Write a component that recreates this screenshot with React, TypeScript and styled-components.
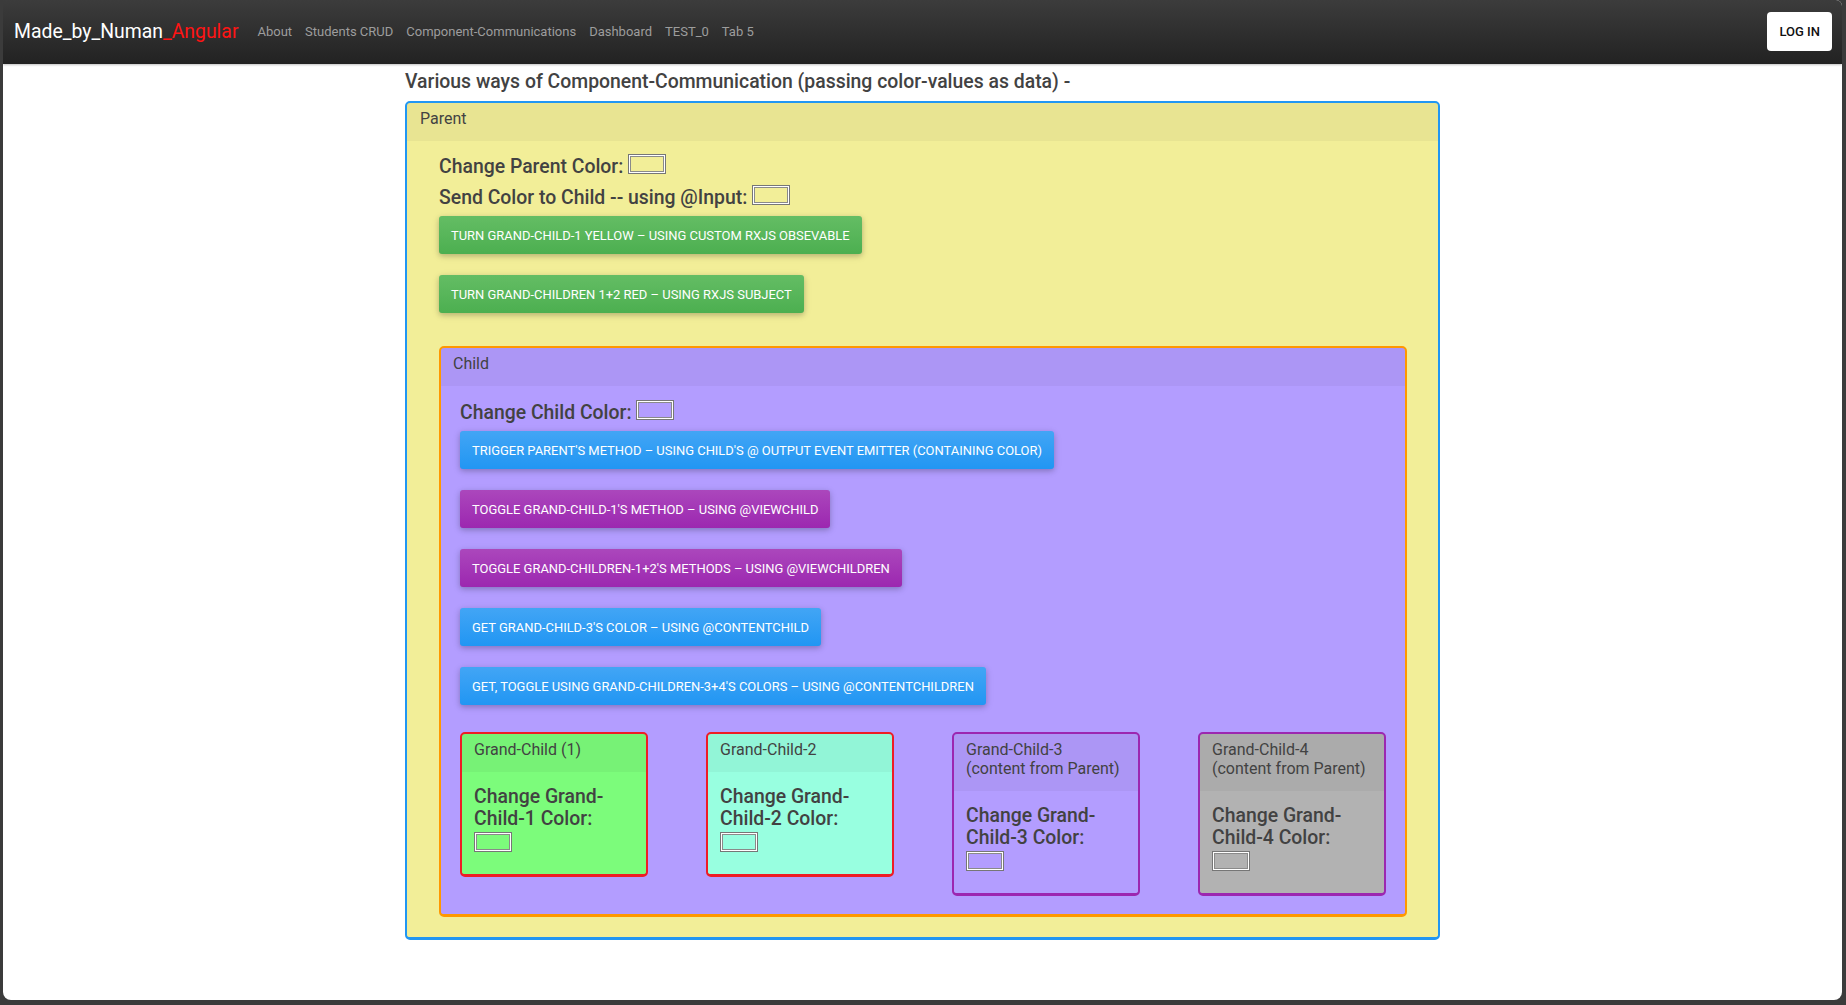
import React from "react";
import styled, { createGlobalStyle } from "styled-components";

const GlobalStyle = createGlobalStyle`
  * {
    box-sizing: border-box;
  }

  body {
    margin: 0;
    background-color: #3b3b3b;
    font-family: Roboto, "Liberation Sans", sans-serif;
  }
`;

const Frame = styled.div`
  margin: 0 4px 0 3px;
  height: 1000px;
  background-color: #ffffff;
  border-radius: 0 6px 8px 8px;
  overflow: hidden;
`;

const NavBar = styled.nav`
  height: 64px;
  padding: 0 10px 2px 11px;

  display: flex;
  align-items: center;

  background-image: linear-gradient(to bottom, #3c3c3c 0%, #222222 100%);
  box-shadow: 0 1px 2px rgba(0, 0, 0, 0.25);
`;

const Brand = styled.a`
  margin-right: 19px;

  font-size: 19.4px;
  color: #ffffff;
  text-decoration: none;
`;

const BrandAccent = styled.span`
  color: #ff1414;
`;

const NavLinks = styled.div`
  display: flex;
  gap: 13px;
`;

const NavLink = styled.a`
  font-size: 13px;
  color: #9d9d9d;
  text-decoration: none;
`;

const LoginButton = styled.button`
  margin-left: auto;
  height: 39px;
  padding: 0 12px;

  border: none;
  border-radius: 4px;
  background-color: #ffffff;

  font-family: Roboto, "Liberation Sans", sans-serif;
  font-size: 13px;
  font-weight: 500;
  color: #111111;
`;

const Main = styled.main`
  width: 1035px;
  margin: 0 auto;
  padding-top: 6px;
`;

const Heading = styled.h2`
  margin: 0 0 7px;

  font-size: 19.4px;
  line-height: 24px;
  font-weight: 500;
  color: #424242;
`;

const Card = styled.section<{ $border: string; $bg: string; $width?: string }>`
  width: ${(p) => p.$width || "auto"};

  border: 2px solid ${(p) => p.$border};
  border-bottom-width: 3px;
  border-radius: 5px;
  background-color: ${(p) => p.$bg};
  overflow: hidden;
`;

const CardHeader = styled.div<{ $padX?: number }>`
  padding: 6px ${(p) => p.$padX ?? 12}px 13px;

  background-color: rgba(0, 0, 0, 0.04);

  font-size: 16px;
  line-height: 19px;
  color: #424242;
`;

const CardBody = styled.div<{ $pad: string }>`
  padding: ${(p) => p.$pad};
`;

const FieldRow = styled.div`
  height: 24px;
  margin-bottom: 7px;

  font-size: 19.4px;
  line-height: 26px;
  font-weight: 500;
  color: #424242;
`;

const ColorBox = styled.span`
  display: inline-block;
  width: 38px;
  height: 20px;
  vertical-align: -1px;

  border: 1px solid #767676;
  box-shadow: inset 0 0 0 1px #ffffff, inset 0 0 0 2px #8a8a8a;
`;

const ButtonStack = styled.div`
  display: flex;
  flex-direction: column;
  align-items: flex-start;
  gap: 21px;
`;

const tones = {
  green: ["#64bd64", "#4caf50"],
  blue: ["#42a5f5", "#2196f3"],
  purple: ["#ab47bc", "#9c27b0"],
};

const ActionButton = styled.button<{ $tone: keyof typeof tones }>`
  height: 38px;
  padding: 0 12px;

  border: none;
  border-radius: 3px;
  background-image: linear-gradient(
    to bottom,
    ${(p) => tones[p.$tone][0]},
    ${(p) => tones[p.$tone][1]}
  );
  box-shadow: 0 2px 5px rgba(0, 0, 0, 0.16), 0 2px 8px rgba(0, 0, 0, 0.12);

  font-family: Roboto, "Liberation Sans", sans-serif;
  font-size: 12.95px;
  color: #ffffff;
  text-transform: uppercase;
  white-space: nowrap;
`;

const ChildWrap = styled.div`
  margin-top: 33px;
`;

const GrandRow = styled.div`
  margin-top: 27px;

  display: flex;
  justify-content: space-between;
  align-items: flex-start;
`;

const GrandTitle = styled.div`
  font-size: 19.4px;
  line-height: 22px;
  font-weight: 500;
  color: #424242;
`;

const GrandBox = styled(ColorBox)`
  display: block;
  margin-top: 2px;
`;

const grandChildren = [
  { title: ["Grand-Child (1)"], label: "Change Grand-Child-1 Color:", bg: "#7cfc7b", border: "#ee1c25" },
  { title: ["Grand-Child-2"], label: "Change Grand-Child-2 Color:", bg: "#98ffe0", border: "#ee1c25" },
  { title: ["Grand-Child-3", "(content from Parent)"], label: "Change Grand-Child-3 Color:", bg: "#b39dff", border: "#9c27b0" },
  { title: ["Grand-Child-4", "(content from Parent)"], label: "Change Grand-Child-4 Color:", bg: "#b2b2b2", border: "#9c27b0" },
];

const App = () => {
  return (
    <>
      <GlobalStyle />
      <Frame>
        <NavBar>
          <Brand href="#">
            Made_by_Numan<BrandAccent>_Angular</BrandAccent>
          </Brand>
          <NavLinks>
            <NavLink href="#">About</NavLink>
            <NavLink href="#">Students CRUD</NavLink>
            <NavLink href="#">Component-Communications</NavLink>
            <NavLink href="#">Dashboard</NavLink>
            <NavLink href="#">TEST_0</NavLink>
            <NavLink href="#">Tab 5</NavLink>
          </NavLinks>
          <LoginButton>LOG IN</LoginButton>
        </NavBar>

        <Main>
          <Heading>
            Various ways of Component-Communication (passing color-values as data) -
          </Heading>

          <Card $border="#2196f3" $bg="#f2ee98">
            <CardHeader $padX={13}>Parent</CardHeader>
            <CardBody $pad="13px 31px 20px 32px">
              <FieldRow>
                Change Parent Color: <ColorBox />
              </FieldRow>
              <FieldRow>
                Send Color to Child -- using @Input: <ColorBox />
              </FieldRow>
              <ButtonStack>
                <ActionButton $tone="green">
                  Turn Grand-Child-1 yellow – using custom RxJS Obsevable
                </ActionButton>
                <ActionButton $tone="green">
                  Turn Grand-Children 1+2 red – using RxJS Subject
                </ActionButton>
              </ButtonStack>

              <ChildWrap>
                <Card $border="#ff9800" $bg="#b39dff">
                  <CardHeader>Child</CardHeader>
                  <CardBody $pad="14px 19px 18px">
                    <FieldRow>
                      Change Child Color: <ColorBox />
                    </FieldRow>
                    <ButtonStack>
                      <ActionButton $tone="blue">
                        Trigger Parent's method – using Child's @ Output Event Emitter (containing color)
                      </ActionButton>
                      <ActionButton $tone="purple">
                        Toggle Grand-Child-1's method – using @ViewChild
                      </ActionButton>
                      <ActionButton $tone="purple">
                        Toggle Grand-Children-1+2's methods – using @ViewChildren
                      </ActionButton>
                      <ActionButton $tone="blue">
                        Get Grand-Child-3's color – using @ContentChild
                      </ActionButton>
                      <ActionButton $tone="blue">
                        Get, Toggle using Grand-Children-3+4's colors – using @ContentChildren
                      </ActionButton>
                    </ButtonStack>

                    <GrandRow>
                      {grandChildren.map((gc) => (
                        <Card key={gc.label} $border={gc.border} $bg={gc.bg} $width="188px">
                          <CardHeader>
                            {gc.title.map((line) => (
                              <div key={line}>{line}</div>
                            ))}
                          </CardHeader>
                          <CardBody $pad="14px 12px 22px">
                            <GrandTitle>{gc.label}</GrandTitle>
                            <GrandBox />
                          </CardBody>
                        </Card>
                      ))}
                    </GrandRow>
                  </CardBody>
                </Card>
              </ChildWrap>
            </CardBody>
          </Card>
        </Main>
      </Frame>
    </>
  );
};

export default App;
